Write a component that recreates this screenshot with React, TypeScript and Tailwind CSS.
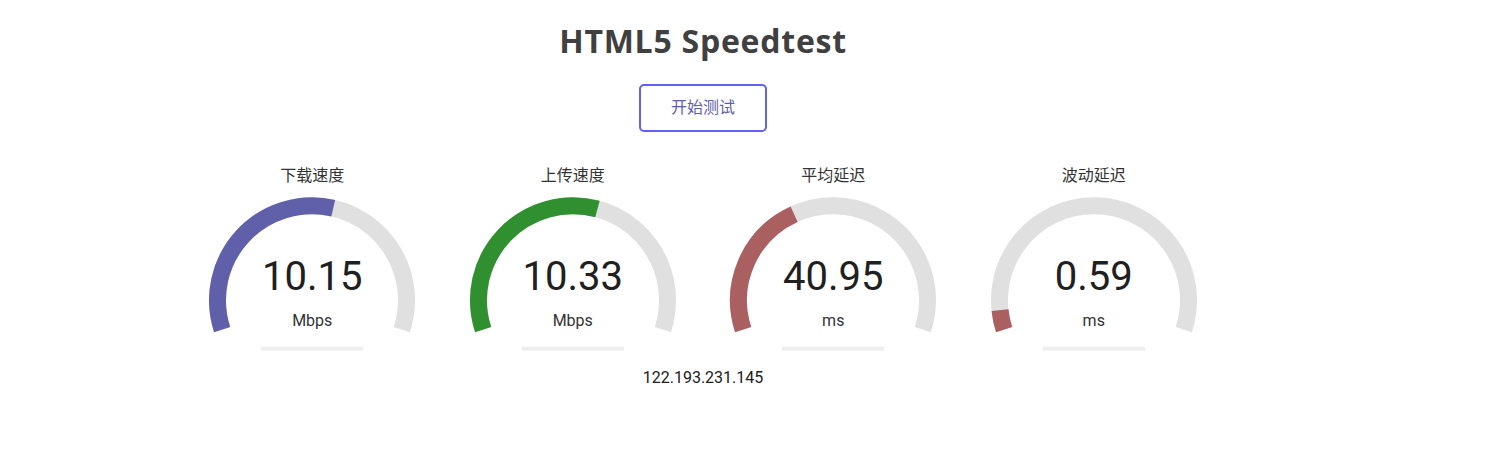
import React from "react";

// meter geometry, in px inside a 256x200 test area
const CX = 128;
const CY = 140.3;
const R = 94.5;
const START = -198;
const END = 18;

type Meter = {
  label: string;
  value: string;
  unit: string;
  color: string;
  to: number;
};

const meters: Meter[] = [
  { label: "下载速度", value: "10.15", unit: "Mbps", color: "#6060AA", to: -77 },
  { label: "上传速度", value: "10.33", unit: "Mbps", color: "#309030", to: -75 },
  { label: "平均延迟", value: "40.95", unit: "ms", color: "#AA6060", to: -114.3 },
  { label: "波动延迟", value: "0.59", unit: "ms", color: "#AA6060", to: -185.9 },
];

function point(deg: number) {
  const a = (deg * Math.PI) / 180;
  return [CX + R * Math.cos(a), CY + R * Math.sin(a)];
}

function arc(from: number, to: number) {
  const [x1, y1] = point(from);
  const [x2, y2] = point(to);
  const large = to - from > 180 ? 1 : 0;
  return `M ${x1} ${y1} A ${R} ${R} 0 ${large} 1 ${x2} ${y2}`;
}

function TestArea({ meter }: { meter: Meter }) {
  return (
    <div className="relative w-[256px] h-[200px] shrink-0">
      <svg className="absolute inset-0" width="256" height="200" viewBox="0 0 256 200">
        <path d={arc(START, END)} fill="none" stroke="#E0E0E0" strokeWidth="17" />
        <path d={arc(START, meter.to)} fill="none" stroke={meter.color} strokeWidth="17" />
        <rect x="76.8" y="186.7" width="102.4" height="4" fill="#EEEEEE" />
      </svg>
      <div className="relative flex flex-col items-center">
        <div className="pt-[6px] text-[16px] leading-[20px] text-[#333]">{meter.label}</div>
        <div className="mt-[71px] text-[40px] leading-[40px] text-[#202020]">{meter.value}</div>
        <div className="mt-[14px] text-[16px] leading-[20px] text-[#333]">{meter.unit}</div>
      </div>
    </div>
  );
}

export default function App() {
  return (
    <div className="w-[1406px] flex flex-col items-center bg-white font-['Roboto','Noto_Sans_CJK_SC',sans-serif] text-[#202020]">
      <h1 className="mt-[21px] font-['Open_Sans',sans-serif] text-[32px] leading-[40px] font-bold tracking-[0.75px] text-[#404040]">
        HTML5 Speedtest
      </h1>
      <button className="mt-[23px] w-[128px] h-[48px] border-2 border-[#6060FF] rounded-[5px] text-[16px] text-[#6060AA] bg-transparent">
        开始测试
      </button>
      <div className="mt-[28px] flex gap-[4.5px]">
        {meters.map((m) => (
          <TestArea key={m.label} meter={m} />
        ))}
      </div>
      <div className="mt-[8px] text-[16px] leading-[20px] text-[#202020]">122.193.231.145</div>
    </div>
  );
}
